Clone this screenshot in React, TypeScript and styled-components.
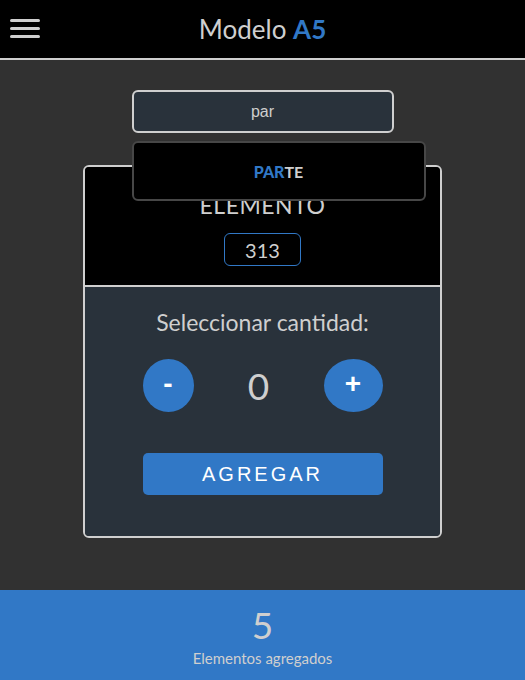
import React, { useState } from 'react'
import styled, { createGlobalStyle } from 'styled-components'

const GlobalStyle = createGlobalStyle`
  html, body {
    margin: 0;
    padding: 0;
    background: #313131;
  }
  * {
    box-sizing: border-box;
  }
`

const BLUE = '#3178c6'
const LIGHT = '#cfcfcf'
const SANS = `Lato, 'Noto Sans', sans-serif`
const ARIAL = `'Liberation Sans', Arial, sans-serif`

const Page = styled.div`
  display: flex;
  flex-direction: column;
  height: 680px;
  background: #313131;
  font-family: ${SANS};
`

const Header = styled.header`
  position: relative;
  height: 60px;
  background: #000;
  border-bottom: 2px solid ${LIGHT};
  display: flex;
  align-items: center;
  justify-content: center;
`

const MenuButton = styled.div`
  position: absolute;
  left: 10px;
  top: 19px;
  width: 30px;
  display: flex;
  flex-direction: column;
  gap: 5px;
  span {
    display: block;
    height: 3px;
    border-radius: 2px;
    background: ${LIGHT};
  }
`

const Title = styled.h1`
  margin: 0;
  font-size: 26px;
  font-weight: 400;
  color: ${LIGHT};
  b {
    color: ${BLUE};
    font-weight: 700;
  }
`

const Main = styled.main`
  flex: 1;
  display: flex;
  flex-direction: column;
  align-items: center;
  padding-top: 30px;
`

const SearchWrap = styled.div`
  position: relative;
  width: 262px;
  margin-bottom: 32px;
  z-index: 10;
`

const SearchInput = styled.input`
  display: block;
  width: 100%;
  height: 43px;
  background: #29323b;
  border: 2px solid ${LIGHT};
  border-radius: 6px;
  color: ${LIGHT};
  font-family: ${ARIAL};
  font-size: 16px;
  text-align: center;
  outline: none;
`

const Suggestions = styled.div`
  position: absolute;
  top: 51px;
  left: 0;
  width: 294px;
  height: 60px;
  background: #000;
  border: 2px solid #474747;
  border-radius: 6px;
  display: flex;
  align-items: center;
  justify-content: center;
  font-size: 16px;
  font-weight: 700;
  color: ${LIGHT};
  b {
    color: ${BLUE};
  }
`

const Card = styled.section`
  width: 359px;
  border: 2px solid ${LIGHT};
  border-radius: 6px;
  overflow: hidden;
`

const CardTop = styled.div`
  background: #000;
  height: 120px;
  border-bottom: 2px solid ${LIGHT};
  display: flex;
  flex-direction: column;
  align-items: center;
  padding-top: 24px;
`

const ElementLabel = styled.div`
  font-size: 23px;
  color: ${LIGHT};
  letter-spacing: 0.5px;
  line-height: 28px;
`

const CodeBox = styled.div`
  margin-top: 14px;
  width: 77px;
  height: 33px;
  border: 1px solid ${BLUE};
  border-radius: 6px;
  display: flex;
  align-items: center;
  justify-content: center;
  color: ${LIGHT};
  font-size: 20px;
`

const CardBottom = styled.div`
  background: #29323b;
  height: 249px;
  display: flex;
  flex-direction: column;
  align-items: center;
  padding-top: 21px;
`

const QtyLabel = styled.div`
  font-size: 23px;
  color: ${LIGHT};
  line-height: 28px;
`

const Stepper = styled.div`
  margin-top: 23px;
  width: 240px;
  display: flex;
  align-items: center;
  justify-content: space-between;
`

const RoundButton = styled.button<{ wide?: boolean }>`
  width: ${({ wide }) => (wide ? '59px' : '51px')};
  height: 53px;
  border: none;
  border-radius: 50%;
  background: ${BLUE};
  color: #fff;
  font-family: ${ARIAL};
  font-size: 28px;
  font-weight: 700;
  display: flex;
  align-items: center;
  justify-content: center;
  padding: 0 0 3px;
`

const Count = styled.div`
  font-size: 37px;
  color: ${LIGHT};
`

const AddButton = styled.button`
  margin-top: 41px;
  width: 240px;
  height: 42px;
  border: none;
  border-radius: 5px;
  background: ${BLUE};
  color: #fff;
  font-family: ${ARIAL};
  font-size: 20px;
  letter-spacing: 3px;
`

const Footer = styled.footer`
  height: 90px;
  background: ${BLUE};
  display: flex;
  flex-direction: column;
  align-items: center;
  padding-top: 13px;
  color: ${LIGHT};
`

const Total = styled.div`
  font-size: 37px;
  line-height: 44px;
`

const TotalLabel = styled.div`
  font-size: 15px;
  margin-top: 2px;
`

export default function App() {
  const [qty, setQty] = useState(0)
  const [query, setQuery] = useState('par')

  return (
    <>
      <GlobalStyle />
      <Page>
        <Header>
          <MenuButton aria-label="Menu">
            <span />
            <span />
            <span />
          </MenuButton>
          <Title>
            Modelo <b>A5</b>
          </Title>
        </Header>
        <Main>
          <SearchWrap>
            <SearchInput value={query} onChange={e => setQuery(e.target.value)} />
            <Suggestions>
              <b>PAR</b>TE
            </Suggestions>
          </SearchWrap>
          <Card>
            <CardTop>
              <ElementLabel>ELEMENTO</ElementLabel>
              <CodeBox>313</CodeBox>
            </CardTop>
            <CardBottom>
              <QtyLabel>Seleccionar cantidad:</QtyLabel>
              <Stepper>
                <RoundButton onClick={() => setQty(Math.max(0, qty - 1))}>-</RoundButton>
                <Count>{qty}</Count>
                <RoundButton wide onClick={() => setQty(qty + 1)}>
                  +
                </RoundButton>
              </Stepper>
              <AddButton>AGREGAR</AddButton>
            </CardBottom>
          </Card>
        </Main>
        <Footer>
          <Total>5</Total>
          <TotalLabel>Elementos agregados</TotalLabel>
        </Footer>
      </Page>
    </>
  )
}
